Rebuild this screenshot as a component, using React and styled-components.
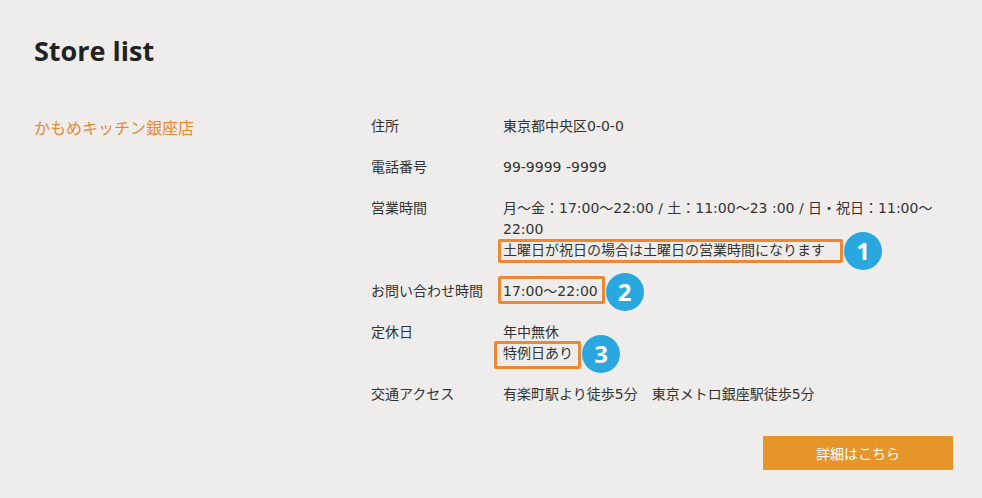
import React from 'react';
import styled, { createGlobalStyle } from 'styled-components';

const GlobalStyle = createGlobalStyle`
  html, body {
    margin: 0;
    padding: 0;
    background: #eeedeb;
  }
  body {
    font-family: "DejaVu Sans", "Noto Sans CJK JP", sans-serif;
    color: #333333;
  }
`;

const Page = styled.div`
  width: 982px;
  height: 498px;
  box-sizing: border-box;
  padding: 33px 29px 0 34px;
  overflow: hidden;
`;

const Title = styled.h1`
  margin: 0;
  font-family: "Open Sans", "Noto Sans", sans-serif;
  font-size: 27px;
  font-weight: 700;
  line-height: 36px;
  color: #222222;
`;

const StoreBlock = styled.section`
  display: grid;
  grid-template-columns: 337px 1fr;
  margin-top: 47px;
`;

const StoreName = styled.h2`
  margin: 0;
  font-family: "Noto Sans CJK JP", sans-serif;
  font-size: 16px;
  font-weight: 400;
  line-height: 22px;
  color: #e8892c;
`;

const InfoList = styled.dl`
  margin: 0;
  display: grid;
  grid-template-columns: 132px 1fr;
  row-gap: 20px;
  font-family: "DejaVu Sans", "Noto Sans CJK JP", sans-serif;
  font-size: 14px;
  line-height: 21px;
`;

const Label = styled.dt`
  margin: 0;
`;

const Value = styled.dd`
  margin: 0;
  display: flex;
  flex-direction: column;
  align-items: flex-start;
`;

const Marked = styled.span`
  position: relative;
  display: inline-block;
  &::before {
    content: '';
    position: absolute;
    top: ${p => -p.$top}px;
    bottom: ${p => -p.$bottom}px;
    left: ${p => -p.$left}px;
    right: ${p => -p.$right}px;
    border: 3px solid #ee8732;
    border-radius: 2px;
  }
`;

const Badge = styled.span`
  position: absolute;
  top: 50%;
  left: calc(100% + ${p => p.$right + 1}px);
  transform: translateY(-50%);
  width: 38px;
  height: 38px;
  border-radius: 50%;
  background: #2aa7de;
  color: #ffffff;
  font-family: "Open Sans", "Noto Sans", sans-serif;
  font-weight: 700;
  font-size: 24px;
  line-height: 38px;
  text-align: center;
`;

const Footer = styled.div`
  display: flex;
  justify-content: flex-end;
  margin-top: 31px;
`;

const DetailButton = styled.button`
  width: 190px;
  height: 34px;
  border: none;
  background: #e6952a;
  color: #ffffff;
  font-family: "Noto Sans CJK JP", "Noto Sans", sans-serif;
  font-size: 14px;
`;

function Note({ n, box, children }) {
  return (
    <Marked $top={box[0]} $right={box[1]} $bottom={box[2]} $left={box[3]}>
      {children}
      <Badge $right={box[1]}>{n}</Badge>
    </Marked>
  );
}

// box: how far the drawn frame reaches past the text [top, right, bottom, left]
const rows = [
  { label: '住所', value: ['東京都中央区0-0-0'] },
  { label: '電話番号', value: ['99-9999 -9999'] },
  {
    label: '営業時間',
    value: ['月～金：17:00～22:00 / 土：11:00～23 :00 / 日・祝日：11:00～', '22:00'],
    note: { n: 1, text: '土曜日が祝日の場合は土曜日の営業時間になります', box: [1, 18, 2, 5] },
  },
  { label: 'お問い合わせ時間', note: { n: 2, text: '17:00～22:00', box: [5, 7, 2, 5] } },
  {
    label: '定休日',
    value: ['年中無休'],
    note: { n: 3, text: '特例日あり', box: [2, 8, 5, 9] },
  },
  { label: '交通アクセス', value: ['有楽町駅より徒歩5分　東京メトロ銀座駅徒歩5分'] },
];

export default function App() {
  return (
    <Page>
      <GlobalStyle />
      <Title>Store list</Title>
      <StoreBlock>
        <StoreName>かもめキッチン銀座店</StoreName>
        <InfoList>
          {rows.map(row => (
            <React.Fragment key={row.label}>
              <Label>{row.label}</Label>
              <Value>
                {(row.value || []).map(line => (
                  <span key={line}>{line}</span>
                ))}
                {row.note && (
                  <Note n={row.note.n} box={row.note.box}>
                    {row.note.text}
                  </Note>
                )}
              </Value>
            </React.Fragment>
          ))}
        </InfoList>
      </StoreBlock>
      <Footer>
        <DetailButton>詳細はこちら</DetailButton>
      </Footer>
    </Page>
  );
}
